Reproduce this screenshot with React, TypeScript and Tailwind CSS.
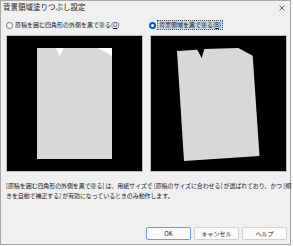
import React from "react";

const font = { fontFamily: '"Noto Sans CJK JP", "Noto Sans", sans-serif' };

const Radio: React.FC<{ checked?: boolean }> = ({ checked }) =>
  checked ? (
    <span className="w-[7px] h-[7px] rounded-full bg-[#005fb8] flex items-center justify-center shrink-0">
      <span className="w-[3px] h-[3px] rounded-full bg-white" />
    </span>
  ) : (
    <span className="w-[7px] h-[7px] rounded-full border border-[#7a7a7a] bg-[#f7f7f7] shrink-0" />
  );

const Btn: React.FC<{ title: string; primary?: boolean }> = ({ title, primary }) => (
  <button
    className={
      primary
        ? "w-[45px] h-[13px] rounded-[2px] border border-[#6aa0d8] bg-[#fbfbfb] text-[6px] leading-[11px] text-[#1a1a1a]"
        : "w-[45px] h-[13px] rounded-[2px] border border-[#d2d2d2] bg-[#fbfbfb] text-[6px] leading-[11px] text-[#1a1a1a]"
    }
  >
    {title}
  </button>
);

export default function App() {
  return (
    <div className="w-[293px] h-[246px] bg-[#f9f9f9] overflow-hidden" style={font}>
      <div className="w-[291px] h-[245px] border border-[#a8a8a8] bg-[#f0f0f0] flex flex-col text-[#1a1a1a]">
        <div className="h-[15px] flex items-start justify-between pl-[2px] pr-[5px] pt-[1px]">
          <span className="text-[7.5px] leading-[10px]">背景領域塗りつぶし設定</span>
          <svg width="6" height="6" viewBox="0 0 6 6" className="mt-[3px]">
            <path d="M0.5 0.5 L5.5 5.5 M5.5 0.5 L0.5 5.5" stroke="#444" strokeWidth="0.8" />
          </svg>
        </div>

        <div className="h-[12px] mt-[3px] flex px-[5px] gap-[7px]">
          <label className="w-[137px] flex items-center gap-[2px] text-[6px] leading-[10px]">
            <Radio />
            <span>原稿を囲む四角形の外側を黒で塗る(<u>O</u>)</span>
          </label>
          <label className="w-[137px] flex items-center gap-[1px] text-[6px] leading-[10px]">
            <Radio checked />
            <span className="bg-[#c9d6e4] border border-dotted border-[#555] px-[1px] leading-[8px]">
              背景領域を黒で塗る(<u>B</u>)
            </span>
          </label>
        </div>

        <div className="mt-[4px] flex px-[5px] gap-[7px]">
          <div className="w-[137px] h-[137px] bg-black border border-[#bdbdbd]">
            <svg width="135" height="135" viewBox="1 1 135 135">
              <rect x="31" y="13" width="75" height="111" fill="#d8d8d8" />
              <polygon points="50,13 57.5,13 53.7,21.7" fill="#ffffff" />
              <polygon points="92,13 106,13 106,21" fill="#ffffff" />
            </svg>
          </div>
          <div className="w-[137px] h-[137px] bg-black border border-[#bdbdbd]">
            <svg width="135" height="135" viewBox="1 1 135 135">
              <polygon
                points="27,16 47.3,14.7 51.7,23 54.3,14 88.3,13 102.7,20.7 109.5,121 34,126"
                fill="#d8d8d8"
              />
            </svg>
          </div>
        </div>

        <p className="mt-[9px] px-[5px] text-[6px] leading-[10px] whitespace-nowrap tracking-[-0.1px]">
          [原稿を囲む四角形の外側を黒で塗る] は、用紙サイズで [原稿のサイズに合わせる] が選ばれており、かつ [傾
          <br />
          きを自動で補正する] が有効になっているときのみ動作します。
        </p>

        <div className="mt-auto mb-[4px] flex justify-end gap-[3px] pr-[3px]">
          <Btn title="OK" primary />
          <Btn title="キャンセル" />
          <Btn title="ヘルプ" />
        </div>
      </div>
    </div>
  );
}
